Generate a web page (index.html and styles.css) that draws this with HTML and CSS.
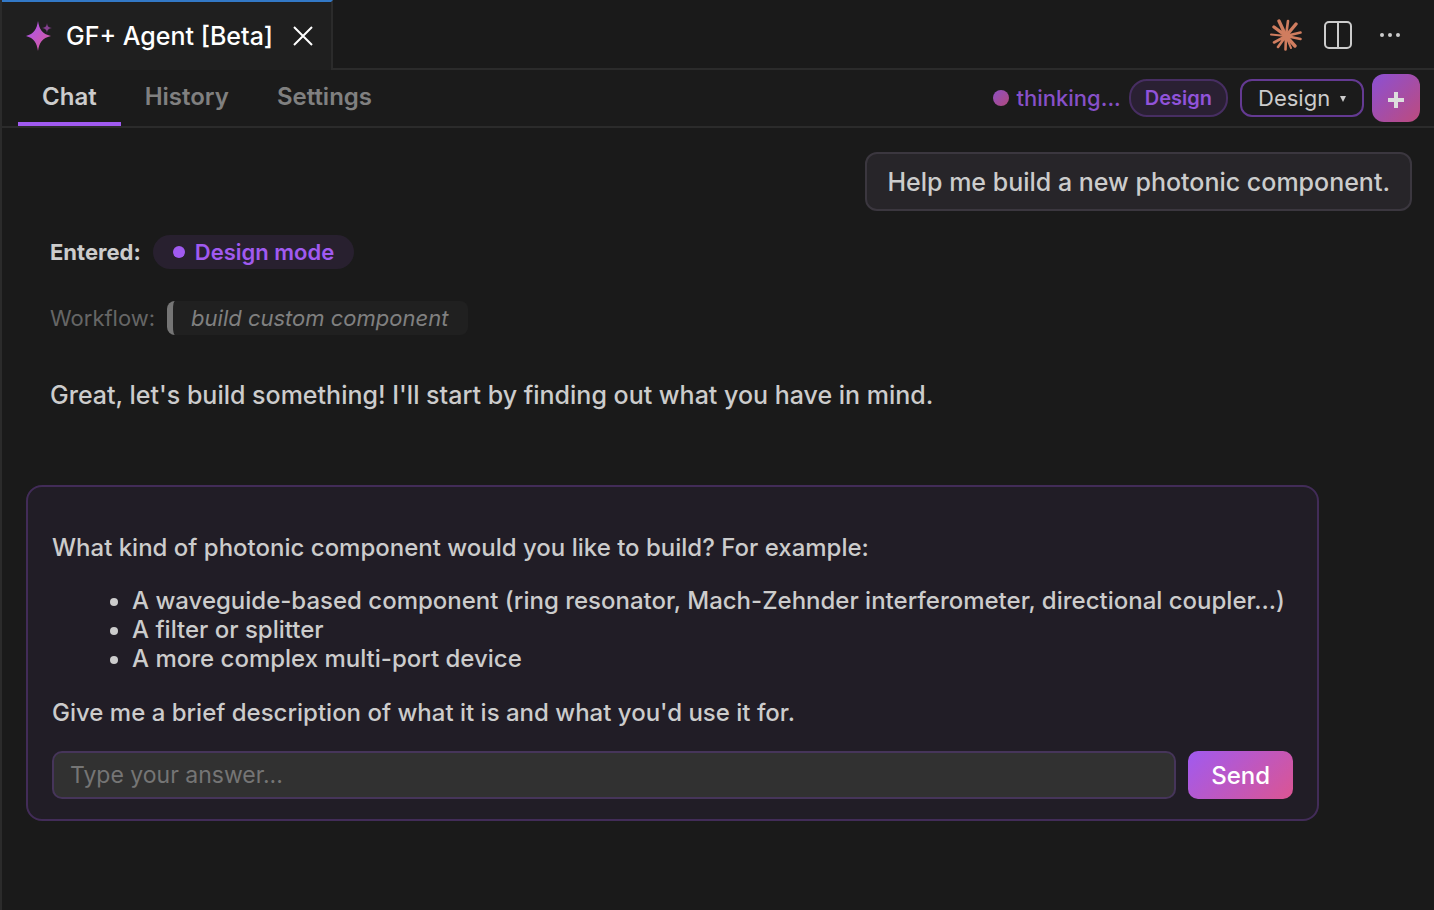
FILE: index.html
```html
<!DOCTYPE html>
<html lang="en">
  <head>
    <meta charset="utf-8">
    <title>GF+ Agent [Beta]</title>
    <link rel="stylesheet" href="styles.css">
  </head>
  <body>
    <header class="titlebar">
      <div class="tab">
        <svg class="tab-icon" viewBox="0 0 28 32" aria-hidden="true">
          <defs>
            <linearGradient id="sparkle" x1="0" y1="0" x2="1" y2="1">
              <stop offset="0" stop-color="#a855f7" />
              <stop offset="1" stop-color="#db5a93" />
            </linearGradient>
          </defs>
          <path fill="url(#sparkle)" d="M12 1 C13.2 9 16 14 25 16 C16 18 13.2 23 12 31 C10.800 23 8 18 0 16 C8 14 10.800 9 12 1Z" />
          <path fill="#84408f" d="M21 3 C21.500 6.500 22.500 7.500 26 8 C22.500 8.500 21.500 9.500 21 13 C20.500 9.500 19.500 8.500 16 8 C19.500 7.500 20.500 6.500 21 3Z" />
        </svg>
        <span class="tab-title">GF+ Agent [Beta]</span>
        <button class="icon-button" aria-label="Close tab">
          <svg class="close-icon" viewBox="0 0 20 20" aria-hidden="true">
            <path d="M1 1 19 19M19 1 1 19" />
          </svg>
        </button>
      </div>
      <div class="titlebar-actions">
        <button class="icon-button" aria-label="Claude">
          <svg class="burst-icon" viewBox="0 0 32 32" aria-hidden="true">
            <path stroke-width="3.4" d="M16 17 9 2M16 17 4 8M16 17 26 5M16 17 25 27" />
            <path stroke-width="2.600" d="M16 17 18 2M16 17 30.500 13.500M16 17 30.500 20M16 17 15.500 30.500M16 17 8 28M16 17 4 23.500" />
            <path stroke-width="2" d="M16 17 1 15.500M16 17 21 29" />
            <circle cx="16.500" cy="17" r="4" />
          </svg>
        </button>
        <button class="icon-button" aria-label="Split editor">
          <svg class="split-icon" viewBox="0 0 28 28" aria-hidden="true">
            <rect x="1" y="1" width="26" height="26" rx="4" />
            <path d="M14 1V27" />
          </svg>
        </button>
        <button class="icon-button" aria-label="More actions">
          <svg class="more-icon" viewBox="0 0 20 4" aria-hidden="true">
            <circle cx="2" cy="2" r="2" />
            <circle cx="10" cy="2" r="2" />
            <circle cx="18" cy="2" r="2" />
          </svg>
        </button>
      </div>
    </header>

    <div class="toolbar">
      <nav class="nav">
        <a href="#chat" class="nav-link active">Chat</a>
        <a href="#history" class="nav-link">History</a>
        <a href="#settings" class="nav-link">Settings</a>
      </nav>
      <div class="status">
        <span class="status-dot"></span>
        <span>thinking...</span>
      </div>
      <span class="mode-badge">Design</span>
      <label class="mode-select">
        <select aria-label="Mode">
          <option>Design</option>
        </select>
        <svg class="caret" viewBox="0 0 6 6" aria-hidden="true"><path d="M0 0H6L3 6Z" /></svg>
      </label>
      <button class="new-chat" aria-label="New chat">
        <svg viewBox="0 0 18 18" aria-hidden="true"><path d="M9 1V17M1 9H17" /></svg>
      </button>
    </div>

    <main class="chat">
      <div class="user-message">Help me build a new photonic component.</div>

      <div class="event">
        <strong>Entered:</strong>
        <span class="mode-pill">Design mode</span>
      </div>
      <div class="event workflow">
        <span>Workflow:</span>
        <em class="workflow-name">build custom component</em>
      </div>

      <p class="agent-message">Great, let's build something! I'll start by finding out what you have in mind.</p>

      <form class="question">
        <p>What kind of photonic component would you like to build? For example:</p>
        <ul>
          <li>A waveguide-based component (ring resonator, Mach-Zehnder interferometer, directional coupler...)</li>
          <li>A filter or splitter</li>
          <li>A more complex multi-port device</li>
        </ul>
        <p>Give me a brief description of what it is and what you'd use it for.</p>
        <div class="answer-row">
          <input type="text" class="answer" placeholder="Type your answer..." aria-label="Your answer">
          <button type="button" class="send">Send</button>
        </div>
      </form>
    </main>
  </body>
</html>
```
FILE: styles.css
```css
* {
  box-sizing: border-box;
}

body {
  margin: 0;
  min-height: 100vh;
  border-left: 2px solid #2b2b2b;
  background: #1a1a1a;
  color: #cccccc;
  font-family: Inter, "Liberation Sans", sans-serif;
  font-size: 25px;
  font-weight: 500;
  line-height: 29px;
}

button,
input,
select {
  font: inherit;
  color: inherit;
}

button {
  cursor: pointer;
}

svg {
  display: block;
}

.titlebar {
  display: flex;
  height: 70px;
}

.tab {
  display: flex;
  align-items: center;
  padding: 0 18px 0 24px;
  border-top: 2px solid #3278c6;
  border-right: 2px solid #2b2b2b;
  background: #1f1f1f;
  color: #ffffff;
}

.tab-icon {
  width: 28px;
  height: 32px;
  margin-right: 12px;
}

.tab-title {
  margin-right: 20px;
}

.icon-button {
  padding: 0;
  border: 0;
  background: none;
}

.close-icon {
  width: 20px;
  height: 20px;
  fill: none;
  stroke: #ffffff;
  stroke-width: 2;
}

.titlebar-actions {
  flex: 1;
  display: flex;
  align-items: center;
  justify-content: flex-end;
  gap: 22px;
  padding: 2px 34px 0 0;
  border-bottom: 2px solid #2b2b2b;
}

.burst-icon {
  width: 32px;
  height: 32px;
  fill: #d07d5f;
  stroke: #d07d5f;
  stroke-linecap: round;
}

.burst-icon circle {
  stroke: none;
}

.split-icon {
  width: 28px;
  height: 28px;
  fill: none;
  stroke: #cccccc;
  stroke-width: 2;
}

.more-icon {
  width: 20px;
  height: 4px;
  margin-left: 6px;
  fill: #cccccc;
}

.toolbar {
  display: flex;
  align-items: center;
  height: 58px;
  padding: 0 14px 0 16px;
  border-bottom: 2px solid #2b2b2b;
  background: #1b1b1b;
}

.nav {
  display: flex;
  align-self: stretch;
  margin-right: auto;
}

.nav-link {
  padding: 12px 24px 0;
  border-bottom: 4px solid transparent;
  color: #808080;
  font-size: 24px;
  font-weight: 600;
  text-decoration: none;
}

.nav-link.active {
  border-bottom-color: #a05af0;
  color: #cccccc;
}

.status {
  display: flex;
  align-items: center;
  gap: 8px;
  margin-right: 8px;
  color: #8750c8;
  font-size: 22px;
}

.status-dot {
  width: 16px;
  height: 16px;
  border-radius: 50%;
  background: linear-gradient(135deg, #8e4fc4, #b04a7c);
}

.mode-badge {
  height: 38px;
  margin-right: 12px;
  padding: 0 14px;
  border: 2px solid #472e62;
  border-radius: 18px;
  background: #2a2033;
  color: #9153da;
  font-size: 20px;
  font-weight: 600;
  line-height: 34px;
}

.mode-select {
  display: flex;
  align-items: center;
  gap: 9px;
  height: 38px;
  margin-right: 8px;
  padding: 0 16px;
  border: 2px solid #643a92;
  border-radius: 12px;
  font-size: 22px;
  font-weight: 400;
}

.mode-select select {
  padding: 0;
  border: 0;
  background: none;
  appearance: none;
}

.caret {
  width: 6px;
  height: 6px;
  margin-top: 2px;
  fill: #cccccc;
}

.new-chat {
  display: flex;
  align-items: center;
  justify-content: center;
  width: 48px;
  height: 48px;
  padding: 0;
  border: 0;
  border-radius: 12px;
  background: linear-gradient(135deg, #8b50d4, #bd4b7d);
}

.new-chat svg {
  width: 18px;
  height: 18px;
  margin-top: 4px;
  stroke: #dddddd;
  stroke-width: 4;
}

.chat {
  display: flex;
  flex-direction: column;
  align-items: flex-start;
  padding: 24px 22px 24px 24px;
}

.user-message {
  align-self: flex-end;
  margin-bottom: 24px;
  padding: 14px 20px 12px;
  border: 2px solid #3b373f;
  border-radius: 12px;
  background: #272529;
}

.event {
  display: flex;
  align-items: center;
  gap: 12px;
  margin-left: 24px;
  margin-bottom: 32px;
  font-size: 22px;
  font-weight: 400;
  line-height: 34px;
}

.event strong {
  font-weight: 700;
}

.mode-pill {
  display: flex;
  align-items: center;
  gap: 10px;
  padding: 0 20px;
  border-radius: 17px;
  background: #28202f;
  color: #a05af0;
  font-weight: 600;
}

.mode-pill::before {
  content: "";
  width: 12px;
  height: 12px;
  border-radius: 50%;
  background: #a05af0;
}

.workflow {
  color: #666666;
}

.workflow-name {
  padding: 0 20px 0 18px;
  border-left: 6px solid #757575;
  border-radius: 8px;
  background: #202020;
  color: #808080;
}

.agent-message {
  margin: 14px 24px 75px;
}

.question {
  align-self: stretch;
  margin-right: 93px;
  padding: 22px 24px 20px;
  border: 2px solid #422c58;
  border-radius: 16px;
  background: #211d26;
  font-size: 24px;
}

.question p {
  margin: 24px 0;
}

.question ul {
  margin: 24px 0 25px;
  padding-left: 80px;
}

.answer-row {
  display: flex;
  gap: 12px;
}

.answer {
  flex: 1;
  min-width: 0;
  height: 48px;
  padding: 0 16px;
  border: 2px solid #46355a;
  border-radius: 10px;
  background: #313131;
  font-size: 23px;
  font-weight: 400;
}

.answer::placeholder {
  color: #757575;
}

.send {
  height: 48px;
  padding: 0 23px;
  border: 0;
  border-radius: 10px;
  background: linear-gradient(135deg, #a05af0, #db5592);
  color: #ffffff;
}
```
